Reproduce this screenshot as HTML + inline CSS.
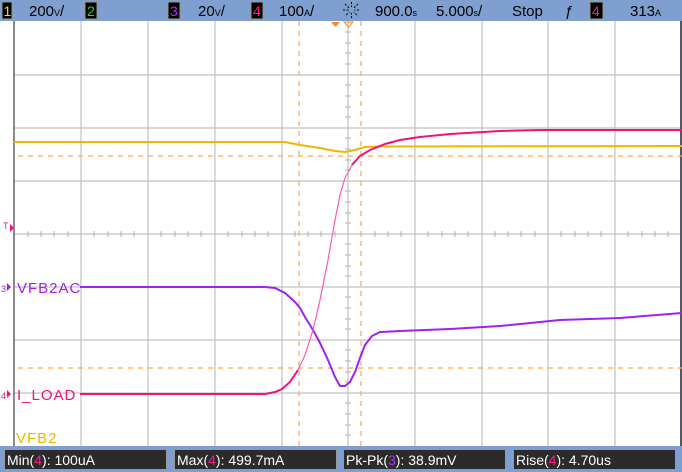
<!DOCTYPE html>
<html><head><meta charset="utf-8"><style>
body{margin:0;width:682px;height:472px;overflow:hidden;background:#fff;font-family:"Liberation Sans",sans-serif}
svg{display:block}
</style></head><body>
<svg width="682" height="472" viewBox="0 0 682 472" xmlns="http://www.w3.org/2000/svg" font-family="Liberation Sans, sans-serif">
<rect x="0" y="0" width="682" height="472" fill="#fff"/>
<rect x="0" y="0" width="682" height="21" fill="#7e9fcf"/>
<g stroke="#c0c0c0" stroke-width="1.2">
<line x1="81" y1="21" x2="81" y2="446"/><line x1="148" y1="21" x2="148" y2="446"/><line x1="215" y1="21" x2="215" y2="446"/><line x1="282" y1="21" x2="282" y2="446"/><line x1="348" y1="21" x2="348" y2="446"/><line x1="415" y1="21" x2="415" y2="446"/><line x1="482" y1="21" x2="482" y2="446"/><line x1="548" y1="21" x2="548" y2="446"/><line x1="615" y1="21" x2="615" y2="446"/>
<line x1="14" y1="75" x2="682" y2="75"/><line x1="14" y1="128" x2="682" y2="128"/><line x1="14" y1="181" x2="682" y2="181"/><line x1="14" y1="234" x2="682" y2="234"/><line x1="14" y1="287" x2="682" y2="287"/><line x1="14" y1="340" x2="682" y2="340"/><line x1="14" y1="393" x2="682" y2="393"/>
</g>
<g stroke="#b0b0b0" stroke-width="1">
<path d="M345 32h6M345 43h6M345 53h6M345 64h6M345 85h6M345 96h6M345 107h6M345 117h6M345 138h6M345 149h6M345 160h6M345 170h6M345 191h6M345 202h6M345 213h6M345 223h6M345 244h6M345 255h6M345 266h6M345 276h6M345 297h6M345 308h6M345 319h6M345 329h6M345 350h6M345 361h6M345 372h6M345 382h6M345 403h6M345 414h6M345 425h6M345 435h6"/>
<path d="M28 231v6M41 231v6M54 231v6M68 231v6M94 231v6M108 231v6M121 231v6M134 231v6M161 231v6M175 231v6M188 231v6M201 231v6M228 231v6M242 231v6M255 231v6M268 231v6M295 231v6M308 231v6M321 231v6M335 231v6M361 231v6M375 231v6M388 231v6M401 231v6M428 231v6M442 231v6M455 231v6M468 231v6M495 231v6M508 231v6M521 231v6M535 231v6M561 231v6M575 231v6M588 231v6M601 231v6M628 231v6M642 231v6M655 231v6M668 231v6"/>
</g>
<line x1="14" y1="21" x2="14" y2="446" stroke="#666" stroke-width="1.5"/>
<line x1="681" y1="21" x2="681" y2="446" stroke="#556" stroke-width="2"/>
<g stroke="#ffa64d" stroke-width="1.2" stroke-dasharray="5,5">
<line x1="299" y1="21" x2="299" y2="446"/><line x1="361" y1="21" x2="361" y2="446"/>
<line x1="18" y1="156" x2="682" y2="156"/><line x1="18" y1="368" x2="682" y2="368"/>
</g>
<polyline fill="none" stroke="#f2b600" stroke-width="2" points="14,142 285,142 300,145 320,148 335,151 345,152 355,150 365,147 380,146.5 682,146"/>
<polyline fill="none" stroke="#a020f0" stroke-width="2" points="80,287 265,287 275,288 285,293 295,302 300,308 305,317 313,330 320,343 328,360 335,377 340,386 345,386 350,382 355,372 360,358 365,345 372,336 380,332 400,331 450,329 500,326 560,320 620,318 682,313"/>
<polyline fill="none" stroke="#f0137a" stroke-width="2" points="80,394 265,394 275,392 282,389 290,382 298,370"/>
<polyline fill="none" stroke="#ff5ab0" stroke-width="1.2" points="298,370 305,355 313,330 320,300 328,260 335,220 340,195 345,178 352,165"/>
<polyline fill="none" stroke="#f0137a" stroke-width="2" points="352,165 360,156 370,150 385,144 400,140 420,137 450,134 500,131 540,130 682,130"/>
<text x="17" y="293" font-size="15" fill="#a020f0" letter-spacing="1">VFB2AC</text>
<text x="17" y="400" font-size="15" fill="#f0137a" letter-spacing="1">I_LOAD</text>
<text x="16" y="443" font-size="15" fill="#f2b600" letter-spacing="1">VFB2</text>
<text x="3" y="229" font-size="9" fill="#f0137a">T</text><path d="M10 224 l4 4 -4 4z" fill="#f0137a"/>
<text x="1" y="292" font-size="9" fill="#a020f0">3</text><path d="M7 283 l4 4 -4 4z" fill="#a020f0"/>
<text x="1" y="399" font-size="9" fill="#f0137a">4</text><path d="M7 390 l4 4 -4 4z" fill="#f0137a"/>
<path d="M331 22 h9 l-4.5 5z" fill="#ff8a1a"/>
<path d="M344 22 h9 l-4.5 5z" fill="none" stroke="#ff8a1a"/>
<g font-size="15" fill="#000">
<rect x="2" y="2" width="10" height="17" fill="#000" stroke="#998" /><text x="3.5" y="16" fill="#f2e000" font-size="14">1</text>
<text x="29" y="16">200<tspan font-size="9">V</tspan>/</text>
<rect x="85" y="2" width="12" height="17" fill="#000" stroke="#998"/><text x="87" y="16" fill="#22e022" font-size="14">2</text>
<rect x="168" y="2" width="12" height="17" fill="#000" stroke="#998"/><text x="170" y="16" fill="#b030ff" font-size="14">3</text>
<text x="198" y="16">20<tspan font-size="9">V</tspan>/</text>
<rect x="251" y="2" width="12" height="17" fill="#000" stroke="#998"/><text x="253" y="16" fill="#ff1a8a" font-size="14">4</text>
<text x="279" y="16">100<tspan font-size="9">A</tspan>/</text>
<g stroke="#000" stroke-width="1" stroke-dasharray="2,1.5"><line x1="343" y1="10" x2="360" y2="10"/><line x1="351.5" y1="2" x2="351.5" y2="18"/><line x1="345" y1="4" x2="358" y2="16"/><line x1="358" y1="4" x2="345" y2="16"/></g>
<circle cx="351.5" cy="10" r="3" fill="#7e9fcf"/>
<text x="375" y="16">900.0<tspan font-size="9">s</tspan></text>
<text x="436" y="16">5.000<tspan font-size="9">s</tspan>/</text>
<text x="512" y="16">Stop</text>
<text x="565" y="16">&#x0192;</text>
<rect x="590" y="2" width="13" height="17" fill="#000" stroke="#998"/><text x="592" y="16" fill="#ff1a8a" font-size="14">4</text>
<text x="630" y="16">313<tspan font-size="9">A</tspan></text>
</g>
<rect x="0" y="446" width="682" height="26" fill="#7e9fcf"/>
<g font-size="14" fill="#fff">
<rect x="4.5" y="449.5" width="162" height="20" fill="#2b2b2b" stroke="#999"/>
<text x="7" y="465">Min(<tspan fill="#ff1a8a">4</tspan>): 100uA</text>
<rect x="174.5" y="449.5" width="162" height="20" fill="#2b2b2b" stroke="#999"/>
<text x="177" y="465">Max(<tspan fill="#ff1a8a">4</tspan>): 499.7mA</text>
<rect x="343.5" y="449.5" width="162" height="20" fill="#2b2b2b" stroke="#999"/>
<text x="346" y="465">Pk-Pk(<tspan fill="#b030ff">3</tspan>): 38.9mV</text>
<rect x="513.5" y="449.5" width="162" height="20" fill="#2b2b2b" stroke="#999"/>
<text x="516" y="465">Rise(<tspan fill="#ff1a8a">4</tspan>): 4.70us</text>
</g>
</svg>
</body></html>
